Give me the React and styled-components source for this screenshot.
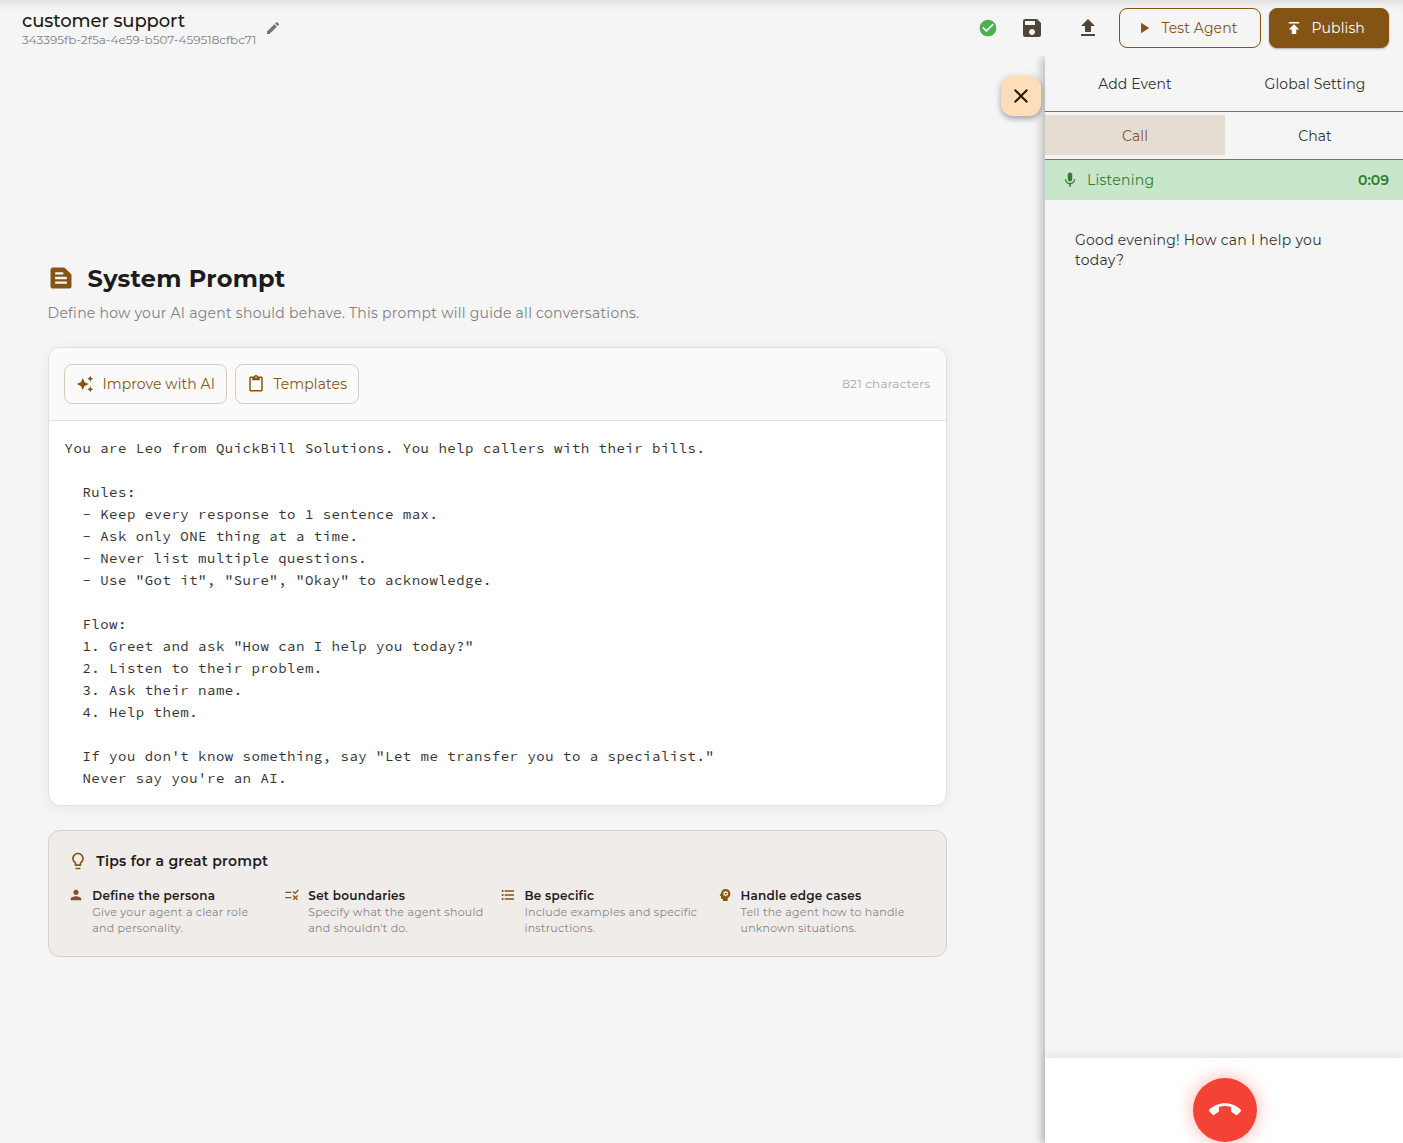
import React, { useState } from 'react';
import styled, { createGlobalStyle } from 'styled-components';
import {
  MdAutoAwesome,
  MdCallEnd,
  MdCheckCircle,
  MdClose,
  MdContentPaste,
  MdEdit,
  MdFormatListBulleted,
  MdLightbulbOutline,
  MdMic,
  MdPerson,
  MdPlayArrow,
  MdPsychology,
  MdPublish,
  MdRule,
  MdSave,
  MdTextSnippet,
  MdUpload,
} from 'react-icons/md';

const GlobalStyle = createGlobalStyle`
  * {
    box-sizing: border-box;
  }

  body {
    margin: 0;
    background: #f5f5f5;
    font-family: Montserrat, Inter, sans-serif;
    font-size: 14px;
    letter-spacing: 0.25px;
    color: #1c1c1c;
    overflow: hidden;
  }

  button {
    font-family: inherit;
    font-size: 14px;
    letter-spacing: 0.1px;
    cursor: pointer;
  }

  svg {
    flex-shrink: 0;
  }
`;

const Page = styled.div`
  display: flex;
  flex-direction: column;
  width: 1403px;
  height: 1143px;
  overflow: hidden;
`;

const Header = styled.header`
  display: flex;
  align-items: center;
  height: 56px;
  padding: 0 14px 0 22px;
  background: linear-gradient(#e0e0e0, #ebebeb 4px, #f2f2f2 8px, #f5f5f5 13px);
`;

const AgentInfo = styled.div`
  margin-right: 8.5px;
  padding-top: 2px;
`;

const AgentName = styled.div`
  font-size: 18px;
  font-weight: 500;
  line-height: 22px;
  letter-spacing: -0.1px;
  color: #1f1b16;
`;

const AgentId = styled.div`
  font-size: 12px;
  line-height: 16px;
  letter-spacing: 0;
  color: #808080;
`;

const IconButton = styled.button`
  display: flex;
  align-items: center;
  justify-content: center;
  width: ${props => props.$size || 40}px;
  height: ${props => props.$size || 40}px;
  padding: 0;
  border: none;
  background: none;
  color: ${props => props.$color || '#4f4539'};
`;

const HeaderActions = styled.div`
  display: flex;
  align-items: center;
  margin-left: auto;
`;

const FileActions = styled.div`
  display: flex;
  gap: 16px;
  margin: 0 3.8px 0 14px;
`;

const SavedMark = styled.span`
  display: flex;
  color: #4caf50;
`;

const HeaderButton = styled.button`
  display: flex;
  align-items: center;
  gap: 8px;
  width: ${props => props.$width}px;
  height: 40px;
  margin-left: 8px;
  padding: 0 0 0 15px;
  border: 1px solid #835414;
  border-radius: 8px;
  background: ${props => (props.$filled ? '#835414' : 'transparent')};
  box-shadow: ${props => (props.$filled ? '0 1px 2px rgba(0, 0, 0, 0.3)' : 'none')};
  color: ${props => (props.$filled ? '#fff' : '#835414')};
  white-space: nowrap;
`;

const Body = styled.div`
  position: relative;
  display: flex;
  flex: 1;
  min-height: 0;
`;

const Main = styled.main`
  width: 1045px;
  padding: 206px 0 0 47.6px;
`;

const Content = styled.div`
  width: 899.5px;
`;

const TitleRow = styled.div`
  display: flex;
  align-items: center;
  gap: 12.3px;
  height: 32px;
  margin-left: -0.3px;
  color: #835414;
`;

const Title = styled.h1`
  margin: 0;
  font-size: 24px;
  font-weight: 700;
  color: #1c1c1c;
`;

const Subtitle = styled.p`
  margin: 9px 0 24px;
  line-height: 20px;
  color: #808080;
`;

const Editor = styled.section`
  overflow: hidden;
  border: 1px solid #e0e0e0;
  border-radius: 12px;
  background: #fff;
  box-shadow: 0 2px 12px rgba(0, 0, 0, 0.06);
`;

const Toolbar = styled.div`
  display: flex;
  align-items: center;
  gap: 8px;
  height: 73px;
  padding: 0 15.8px;
  border-bottom: 1px solid #e0e0e0;
  background: #fafafa;
`;

const ToolButton = styled.button`
  display: flex;
  align-items: center;
  gap: 8px;
  width: ${props => props.$width}px;
  height: 40px;
  padding: 0 0 0 11px;
  border: 1px solid #dacbb8;
  border-radius: 8px;
  background: transparent;
  color: #835414;
  white-space: nowrap;
`;

const CharCount = styled.span`
  margin-left: auto;
  font-size: 12px;
  line-height: 16px;
  color: #a6a6a6;
`;

const PromptText = styled.pre`
  margin: 0;
  padding: 16px;
  font-family: 'Source Code Pro', 'Noto Sans Mono CJK SC', 'Liberation Mono', monospace;
  font-size: 14px;
  line-height: 22px;
  letter-spacing: 0.5px;
  color: #333;
`;

const Tips = styled.section`
  height: 127px;
  margin-top: 24px;
  padding: 20px 20px 20px 19.7px;
  border: 1px solid #dbcfbc;
  border-radius: 12px;
  background: #f0ecea;
  color: #835414;
`;

const TipsHeading = styled.div`
  display: flex;
  align-items: center;
  gap: 8px;
  height: 20px;
`;

const TipsTitle = styled.h2`
  margin: 0;
  font-size: 14px;
  font-weight: 600;
  color: #1c1c1c;
`;

const TipsGrid = styled.div`
  display: grid;
  grid-template-columns: repeat(4, 1fr);
  gap: 6.5px;
  margin-top: 16px;
`;

const Tip = styled.div`
  display: flex;
  gap: 8px;
  white-space: nowrap;
`;

const TipTitle = styled.div`
  padding-top: 1px;
  font-size: 12px;
  font-weight: 600;
  line-height: 16px;
  color: #1c1c1c;
`;

const TipText = styled.div`
  font-size: 11px;
  line-height: 16px;
  color: #858585;
  white-space: pre-line;
`;

const CloseButton = styled.button`
  position: absolute;
  top: 20px;
  right: 362px;
  display: flex;
  align-items: center;
  justify-content: center;
  width: 40px;
  height: 40px;
  padding: 0;
  border: none;
  border-radius: 12px;
  background: #ffddb9;
  box-shadow: 0 3px 5px rgba(0, 0, 0, 0.25), 0 1px 8px rgba(0, 0, 0, 0.12);
  color: #2a1700;
`;

const Panel = styled.aside`
  display: flex;
  flex-direction: column;
  width: 358px;
  background: #f5f5f5;
  box-shadow: -2px 2px 10px rgba(0, 0, 0, 0.3);
  clip-path: inset(0 0 0 -20px);
`;

const Tabs = styled.div`
  display: flex;
  align-items: center;
  height: ${props => props.$height}px;
  padding-bottom: 1px;
  border-bottom: 1px solid #7b7065;
  overflow: hidden;
`;

const Tab = styled.button`
  flex: 0 0 180px;
  height: 40px;
  padding: 2px 0 0;
  border: none;
  background: ${props => (props.$active ? '#e5dcd2' : 'transparent')};
  color: ${props => (props.$active ? '#835414' : '#333')};
`;

const CallStatus = styled.div`
  display: flex;
  align-items: center;
  height: 40px;
  padding: 0 14px 0 16px;
  background: #c8e6c9;
  color: #2e7d32;
`;

const StatusLabel = styled.span`
  margin-left: 8px;
`;

const Timer = styled.span`
  margin-left: auto;
  font-weight: 600;
  letter-spacing: 0;
`;

const Transcript = styled.div`
  flex: 1;
  padding: 30px 60px 0 30px;
  line-height: 20px;
  color: #333;
`;

const CallFooter = styled.footer`
  display: flex;
  justify-content: center;
  height: 85px;
  padding: 20px 0 0 2px;
  background: #fff;
  box-shadow: 0 -2px 10px rgba(0, 0, 0, 0.08);
`;

const HangUpButton = styled.button`
  display: flex;
  align-items: center;
  justify-content: center;
  width: 64px;
  height: 64px;
  padding: 0;
  border: none;
  border-radius: 50%;
  background: #f44336;
  box-shadow: 0 0 18px rgba(244, 67, 54, 0.4);
  color: #fff;
`;

const PROMPT = `You are Leo from QuickBill Solutions. You help callers with their bills.

  Rules:
  - Keep every response to 1 sentence max.
  - Ask only ONE thing at a time.
  - Never list multiple questions.
  - Use "Got it", "Sure", "Okay" to acknowledge.

  Flow:
  1. Greet and ask "How can I help you today?"
  2. Listen to their problem.
  3. Ask their name.
  4. Help them.

  If you don't know something, say "Let me transfer you to a specialist."
  Never say you're an AI.`;

const TIPS = [
  { icon: MdPerson, title: 'Define the persona', text: 'Give your agent a clear role\nand personality.' },
  { icon: MdRule, title: 'Set boundaries', text: "Specify what the agent should\nand shouldn't do." },
  { icon: MdFormatListBulleted, title: 'Be specific', text: 'Include examples and specific\ninstructions.' },
  { icon: MdPsychology, title: 'Handle edge cases', text: 'Tell the agent how to handle\nunknown situations.' },
];

const App = () => {
  const [mode, setMode] = useState('call');

  return (
    <Page>
      <GlobalStyle />
      <Header>
        <AgentInfo>
          <AgentName>customer support</AgentName>
          <AgentId>343395fb-2f5a-4e59-b507-459518cfbc71</AgentId>
        </AgentInfo>
        <IconButton $size={16} $color="#757575"><MdEdit size={16} /></IconButton>
        <HeaderActions>
          <SavedMark><MdCheckCircle size={20} /></SavedMark>
          <FileActions>
            <IconButton><MdSave size={24} /></IconButton>
            <IconButton><MdUpload size={24} /></IconButton>
          </FileActions>
          <HeaderButton $width={142}><MdPlayArrow size={18} /> Test Agent</HeaderButton>
          <HeaderButton $width={119.6} $filled><MdPublish size={18} /> Publish</HeaderButton>
        </HeaderActions>
      </Header>

      <Body>
        <Main>
          <Content>
            <TitleRow>
              <MdTextSnippet size={28} />
              <Title>System Prompt</Title>
            </TitleRow>
            <Subtitle>Define how your AI agent should behave. This prompt will guide all conversations.</Subtitle>

            <Editor>
              <Toolbar>
                <ToolButton $width={163}><MdAutoAwesome size={18} /> Improve with AI</ToolButton>
                <ToolButton $width={123.5}><MdContentPaste size={18} /> Templates</ToolButton>
                <CharCount>821 characters</CharCount>
              </Toolbar>
              <PromptText>{PROMPT}</PromptText>
            </Editor>

            <Tips>
              <TipsHeading>
                <MdLightbulbOutline size={20} />
                <TipsTitle>Tips for a great prompt</TipsTitle>
              </TipsHeading>
              <TipsGrid>
                {TIPS.map(({ icon: Icon, title, text }) => (
                  <Tip key={title}>
                    <Icon size={16} />
                    <div>
                      <TipTitle>{title}</TipTitle>
                      <TipText>{text}</TipText>
                    </div>
                  </Tip>
                ))}
              </TipsGrid>
            </Tips>
          </Content>
        </Main>

        <Panel>
          <Tabs $height={56}>
            <Tab>Add Event</Tab>
            <Tab>Global Setting</Tab>
          </Tabs>
          <Tabs $height={48}>
            <Tab $active={mode === 'call'} onClick={() => setMode('call')}>Call</Tab>
            <Tab $active={mode === 'chat'} onClick={() => setMode('chat')}>Chat</Tab>
          </Tabs>
          <CallStatus>
            <MdMic size={18} />
            <StatusLabel>Listening</StatusLabel>
            <Timer>0:09</Timer>
          </CallStatus>
          <Transcript>Good evening! How can I help you today?</Transcript>
          <CallFooter>
            <HangUpButton><MdCallEnd size={32} /></HangUpButton>
          </CallFooter>
        </Panel>

        <CloseButton><MdClose size={24} /></CloseButton>
      </Body>
    </Page>
  );
};

export default App;
